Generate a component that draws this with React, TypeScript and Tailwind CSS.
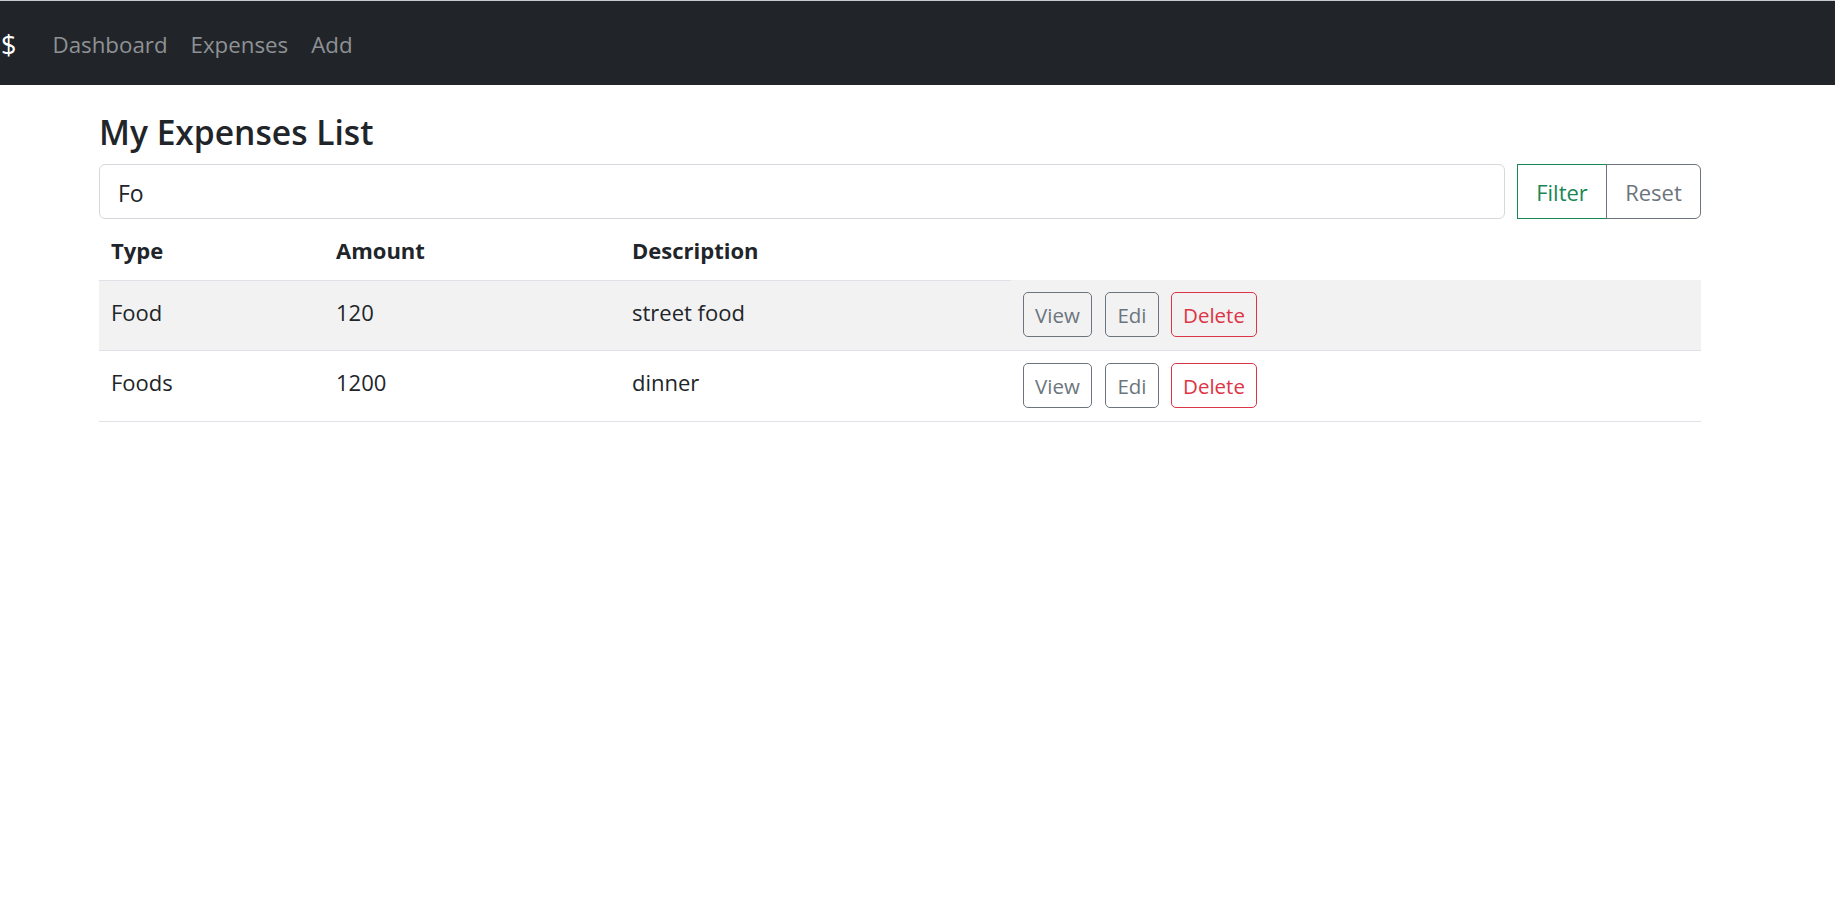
import React, { useState } from 'react';

interface Expense {
  id: number;
  type: string;
  amount: number;
  description: string;
}

const expenses: Expense[] = [
  { id: 1, type: 'Food', amount: 120, description: 'street food' },
  { id: 2, type: 'Foods', amount: 1200, description: 'dinner' },
];

export default function App() {
  const [query, setQuery] = useState('Fo');

  return (
    <div className="min-h-screen bg-white text-[#212529] font-['Open_Sans',_'Noto_Sans',_sans-serif]">
      <div className="h-px bg-[#c9cacc]" />
      {/* Navbar */}
      <nav className="h-[84px] bg-[#212529] flex items-center pt-[3px]">
        <span className="pl-[1px] pr-[36px] text-[27px] text-white leading-none">$</span>
        <div className="flex items-center gap-[23px] text-[22.3px] text-[#8f9194]">
          <a href="#">Dashboard</a>
          <a href="#">Expenses</a>
          <a href="#">Add</a>
        </div>
      </nav>

      <main className="ml-[99px] w-[1602px]">
        <h3 className="pt-[19px] h-[79px] text-[33.6px] font-semibold leading-[56px]">My Expenses List</h3>

        {/* Filter bar */}
        <div className="flex items-stretch h-[55px]">
          <input
            value={query}
            onChange={(e) => setQuery(e.target.value)}
            className="flex-1 rounded-[6px] border border-[#d5d8dc] px-[18px] pt-[3px] text-[23px] outline-none"
          />
          <div className="ml-[12px] flex">
            <button className="w-[90px] pt-[2px] border border-[#198754] text-[#198754] text-[22px]">Filter</button>
            <button className="w-[95px] pt-[2px] -ml-px border border-[#6c757d] rounded-r-[6px] text-[#6c757d] text-[22px]">
              Reset
            </button>
          </div>
        </div>

        {/* Table */}
        <table className="w-full border-collapse text-[22px]">
          <thead>
            <tr className="h-[61px]">
              <th className="w-[225px] px-[12px] pt-[3px] text-left font-bold border-b border-[#dee2e6]">Type</th>
              <th className="w-[296px] px-[12px] pt-[3px] text-left font-bold border-b border-[#dee2e6]">Amount</th>
              <th className="w-[391px] px-[12px] pt-[3px] text-left font-bold border-b border-[#dee2e6]">Description</th>
            </tr>
          </thead>
          <tbody>
            {expenses.map((exp, i) => (
              <tr
                key={exp.id}
                className={i % 2 === 0 ? 'h-[70px] bg-[#f2f2f2] border-b border-[#dee2e6]' : 'h-[71px] border-b border-[#dee2e6]'}
              >
                <td className="px-[12px] pb-[6px] align-middle">{exp.type}</td>
                <td className="px-[12px] pb-[6px] align-middle">{exp.amount}</td>
                <td className="px-[12px] pb-[6px] align-middle">{exp.description}</td>
                <td className="px-[12px] align-middle">
                  <div className="flex text-[20.5px]">
                    <button className="h-[45px] w-[69px] pt-[2px] rounded-[5px] border border-[#6c757d] text-[#6c757d]">View</button>
                    <button className="ml-[13px] h-[45px] w-[54px] pt-[2px] rounded-[5px] border border-[#6c757d] text-[#6c757d]">Edi</button>
                    <button className="ml-[12px] h-[45px] w-[86px] pt-[2px] rounded-[5px] border border-[#dc3545] text-[#dc3545]">Delete</button>
                  </div>
                </td>
              </tr>
            ))}
          </tbody>
        </table>
      </main>
    </div>
  );
}
